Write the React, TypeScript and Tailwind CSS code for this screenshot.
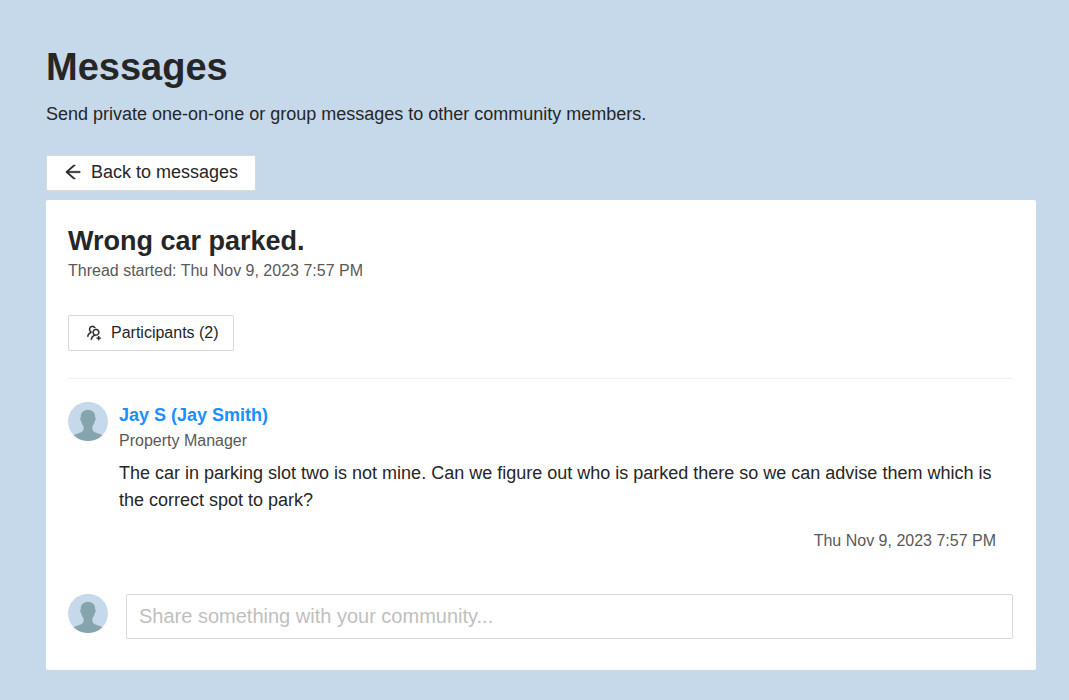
import clsx from "clsx";
import { AiOutlineArrowLeft, AiOutlineUsergroupAdd } from "react-icons/ai";

const Avatar = () => {
  return (
    <svg
      className="h-[39px] w-10 shrink-0 rounded-full bg-[#c6d9ea]"
      viewBox="0 0 40 39"
      aria-hidden="true"
    >
      <path
        d="M20 8c4.700 0 7.400 2.600 7.200 7.400c.9.400.6 3.600-.6 4.100c-.4 2.200-1.100 3.500-2.200 4.700v3c.3 1.900 2 2.900 4.500 3.900c2.800 1.100 5.200 1.700 6.600 3.200V40h-31v-5.700c1.400-1.500 3.800-2.100 6.600-3.200c2.500-1 4.200-2 4.500-3.900v-3c-1.100-1.200-1.800-2.500-2.200-4.700c-1.200-.5-1.500-3.700-.6-4.100C12.600 10.600 15.300 8 20 8z"
        fill="#86a4ae"
      />
    </svg>
  );
};

const App = () => {
  return (
    <main
      className={clsx(
        "min-h-screen bg-[#c6d9ea] pt-9 pr-[33px] pb-[30px] pl-[46px]",
        "font-['Liberation_Sans',Arial,sans-serif] text-lg text-[#262626]"
      )}
    >
      <h1 className="text-[38px] leading-[62px] font-bold">Messages</h1>
      <p className="mt-[2px] leading-7">
        Send private one-on-one or group messages to other community members.
      </p>
      <button
        type="button"
        className="mt-[27px] flex h-9 items-center gap-2 rounded-[2px] border border-[#d9d9d9] bg-white pr-[17px] pb-[2px] pl-4"
      >
        <AiOutlineArrowLeft className="size-5 stroke-[#262626] stroke-[20px]" />
        Back to messages
      </button>

      <section className="mt-[9px] rounded-[2px] bg-white pt-[25px] pr-[23px] pb-[31px] pl-[22px]">
        <h2 className="text-[27px] leading-8 font-bold">Wrong car parked.</h2>
        <p className="text-base leading-7 text-[#595959]">
          Thread started: Thu Nov 9, 2023 7:57 PM
        </p>
        <button
          type="button"
          className="mt-[30px] flex h-9 items-center gap-2 rounded-[2px] border border-[#d9d9d9] pr-[14px] pl-4 text-base"
        >
          <AiOutlineUsergroupAdd className="size-[18px] stroke-[#262626] stroke-[12px]" />
          Participants (2)
        </button>
        <hr className="mt-[27px] border-[#f0f0f0]" />

        <article className="mt-[23px] flex gap-[11px]">
          <Avatar />
          <div className="min-w-0 flex-1">
            <a href="#" className="block leading-[26px] font-bold text-[#1890ff]">
              Jay S (Jay Smith)
            </a>
            <p className="text-base leading-[26px] text-[#595959]">
              Property Manager
            </p>
            <p className="mt-[6px] leading-[27px]">
              The car in parking slot two is not mine. Can we figure out who is
              parked there so we can advise them which is the correct spot to
              park?
            </p>
            <p className="mt-[14px] pr-[17px] text-right text-base leading-[26px] text-[#595959]">
              Thu Nov 9, 2023 7:57 PM
            </p>
          </div>
        </article>

        <form className="mt-10 flex gap-[18px]">
          <Avatar />
          <input
            type="text"
            aria-label="Share something with your community"
            placeholder="Share something with your community..."
            className="h-[45px] min-w-0 flex-1 rounded-[2px] border border-[#d9d9d9] px-3 text-xl placeholder:text-[#bfbfbf]"
          />
        </form>
      </section>
    </main>
  );
};

export default App;
